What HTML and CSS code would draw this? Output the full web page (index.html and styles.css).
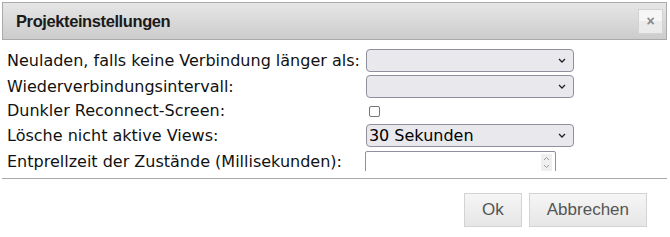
FILE: index.html
```html
<!DOCTYPE html>
<html lang="de">

<head>
    <meta charset="UTF-8">
    <meta name="viewport" content="width=device-width, initial-scale=1.0">
    <title>Projekteinstellungen</title>

    <link rel="stylesheet" href="styles.css">
</head>

<body>
    <div class="dialog">
        <div class="titlebar">
            <span class="title">Projekteinstellungen</span>
            <button class="close" title="Schließen">&#215;</button>
        </div>

        <div class="content">
            <div class="settings">
                <label class="label">Neuladen, falls keine Verbindung länger als:</label>
                <span class="field">
                    <select class="sel"></select>
                    <svg class="chevron" width="8" height="5" viewBox="0 0 8 5"><path d="M1 1 L4 4 L7 1" fill="none" stroke="#222" stroke-width="1.3"/></svg>
                </span>

                <label class="label">Wiederverbindungsintervall:</label>
                <span class="field">
                    <select class="sel"></select>
                    <svg class="chevron" width="8" height="5" viewBox="0 0 8 5"><path d="M1 1 L4 4 L7 1" fill="none" stroke="#222" stroke-width="1.3"/></svg>
                </span>

                <label class="label">Dunkler Reconnect-Screen:</label>
                <span class="field">
                    <input type="checkbox" class="check">
                </span>

                <label class="label">Lösche nicht aktive Views:</label>
                <span class="field">
                    <select class="sel">
                        <option>30 Sekunden</option>
                    </select>
                    <svg class="chevron" width="8" height="5" viewBox="0 0 8 5"><path d="M1 1 L4 4 L7 1" fill="none" stroke="#222" stroke-width="1.3"/></svg>
                </span>

                <label class="label">Entprellzeit der Zustände (Millisekunden):</label>
                <span class="field">
                    <input type="text" class="num">
                    <svg class="spin" width="11" height="17" viewBox="0 0 11 17">
                        <rect width="11" height="17" fill="#efefef"/>
                        <path d="M3 6 L5.5 3.5 L8 6" fill="none" stroke="#999" stroke-width="1"/>
                        <path d="M3 11 L5.5 13.5 L8 11" fill="none" stroke="#999" stroke-width="1"/>
                    </svg>
                </span>
            </div>
        </div>

        <div class="buttonpane">
            <button class="btn">Ok</button>
            <button class="btn">Abbrechen</button>
        </div>
    </div>
</body>

</html>
```

FILE: styles.css
```css
* {
    box-sizing: border-box;
}

body {
    margin: 0;
    background: white;
    font-family: "DejaVu Sans", Verdana, sans-serif;
}

.dialog {
    padding: 2px 3px 0 2px;
}

.titlebar {
    display: flex;
    align-items: center;
    justify-content: space-between;
    height: 38px;
    padding: 0 3px 0 13px;
    border: 1px solid #aaaaaa;
    background: linear-gradient(#e6e6e6, #cccccc);
}

.title {
    font-family: "Liberation Sans", Arial, sans-serif;
    font-weight: bold;
    font-size: 16.5px;
    letter-spacing: -0.4px;
    color: #1a1a1a;
}

.close {
    width: 25px;
    height: 25px;
    padding: 0;
    border: 1px solid #d3d3d3;
    background: linear-gradient(#f6f6f6 50%, #ebebeb 50%);
    color: #888888;
    font-size: 14px;
    font-weight: bold;
    line-height: 20px;
}

.content {
    height: 131px;
    overflow: hidden;
    margin-bottom: 7px;
    padding: 7px 0 0 5px;
}

.settings {
    display: grid;
    grid-template-columns: auto auto;
    grid-template-rows: 27px 25px 23px 27px 25px;
    justify-content: start;
    align-items: center;
    column-gap: 6px;
}

.label {
    font-size: 16px;
    color: #111111;
    white-space: nowrap;
}

.field {
    position: relative;
    display: flex;
    align-items: center;
}

.sel {
    appearance: none;
    width: 208px;
    height: 23px;
    padding: 0 0 0 2px;
    border: 1px solid #8f8f9d;
    border-radius: 4px;
    background: #e9e9ed;
    color: #000000;
    font-family: "DejaVu Sans", Verdana, sans-serif;
    font-size: 16px;
}

.chevron {
    position: absolute;
    right: 8px;
    top: 9px;
    pointer-events: none;
}

.check {
    appearance: none;
    margin: 1px 0 0 3px;
    width: 11px;
    height: 11px;
    border: 1px solid #767676;
    border-radius: 2px;
    background: white;
}

.num {
    width: 191px;
    height: 23px;
    margin-top: 1px;
    margin-left: -1px;
    border: 1px solid #8f8f9d;
    border-radius: 2px;
    background: white;
}

.spin {
    position: absolute;
    left: 175px;
    top: 4px;
    pointer-events: none;
}

.buttonpane {
    display: flex;
    justify-content: flex-end;
    gap: 7px;
    padding: 14px 20px 0 0;
    border-top: 1px solid #aaaaaa;
}

.btn {
    height: 34px;
    padding: 0 17px;
    border: 1px solid #d3d3d3;
    border-radius: 0;
    background: linear-gradient(#f6f6f6, #e6e6e6);
    color: #555555;
    font-family: "Liberation Sans", Arial, sans-serif;
    font-size: 17px;
}
```
